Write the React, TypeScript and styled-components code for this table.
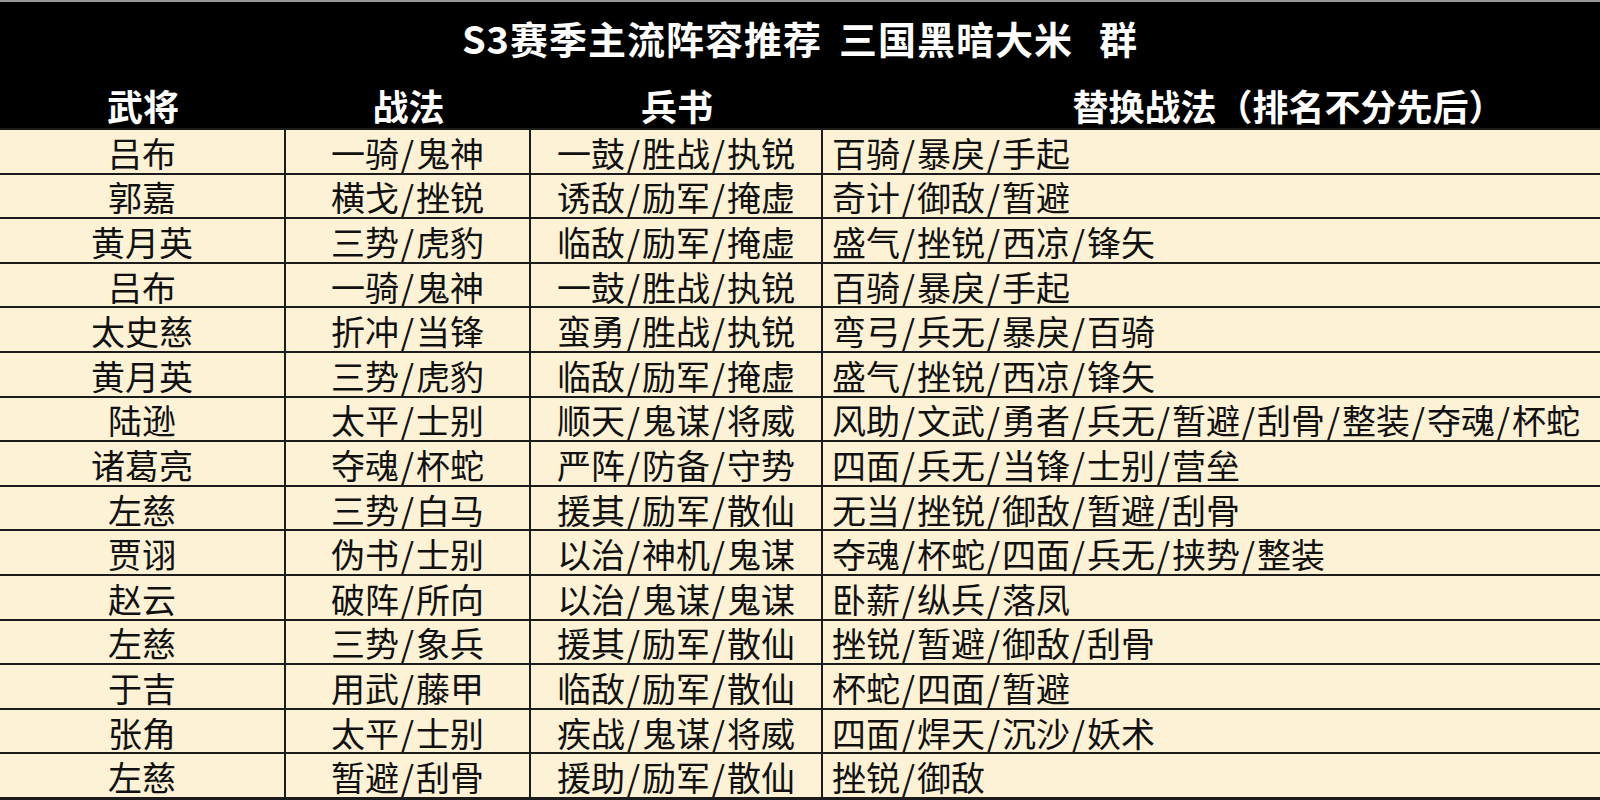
import React from "react";
import styled, { createGlobalStyle } from "styled-components";

const Global = createGlobalStyle`
  html, body { margin: 0; padding: 0; background: #fdf2d5; }
  body { font-family: "Noto Sans CJK SC", "Noto Sans", sans-serif; }
`;

const COLS = "286px 245px 292px 1fr";

const Page = styled.div`
  width: 1600px;
  height: 800px;
  overflow: hidden;
  background: #fdf2d5;
  display: flex;
  flex-direction: column;
`;

const Title = styled.div`
  height: 82px;
  box-sizing: border-box;
  border-top: 2px solid #9a9a9a;
  background: #000;
  color: #fff;
  font-size: 38px;
  line-height: 48px;
  letter-spacing: 1px;
  font-weight: 700;
  display: flex;
  align-items: center;
  justify-content: center;
  padding-bottom: 8px;
  white-space: nowrap;
`;

const TitleGap = styled.span<{ $w: number }>`
  display: inline-block;
  width: ${(p) => p.$w}px;
`;

const HeaderRow = styled.div`
  height: 46px;
  background: #000;
  display: grid;
  grid-template-columns: ${COLS};
`;

const HeadCell = styled.div<{ $shift?: number }>`
  color: #fff;
  font-size: 36px;
  line-height: 42px;
  font-weight: 700;
  display: flex;
  align-items: center;
  justify-content: center;
  padding-left: ${(p) => (p.$shift && p.$shift > 0 ? p.$shift : 0)}px;
  white-space: nowrap;
`;

const Body = styled.div`
  flex: 1;
  display: grid;
  grid-template-rows: repeat(15, 1fr);
  border-bottom: 3px solid #1c1c1c;
`;

const Row = styled.div`
  display: grid;
  grid-template-columns: ${COLS};
  border-top: 2px solid #1c1c1c;
  min-height: 0;
`;

const Cell = styled.div<{ $align?: "left" | "center"; $last?: boolean }>`
  display: flex;
  align-items: center;
  justify-content: ${(p) => (p.$align === "left" ? "flex-start" : "center")};
  padding-left: ${(p) => (p.$align === "left" ? "9px" : "0")};
  padding-top: 3px;
  border-right: ${(p) => (p.$last ? "none" : "2px solid #1c1c1c")};
  font-size: 34px;
  line-height: 38px;
  font-weight: 400;
  color: #111;
  white-space: nowrap;
  min-height: 0;
`;

const Sep = styled.span`
  display: inline-block;
  width: 17px;
  text-align: center;
`;

const rows: string[][] = [
  ["吕布", "一骑/鬼神", "一鼓/胜战/执锐", "百骑/暴戾/手起"],
  ["郭嘉", "横戈/挫锐", "诱敌/励军/掩虚", "奇计/御敌/暂避"],
  ["黄月英", "三势/虎豹", "临敌/励军/掩虚", "盛气/挫锐/西凉/锋矢"],
  ["吕布", "一骑/鬼神", "一鼓/胜战/执锐", "百骑/暴戾/手起"],
  ["太史慈", "折冲/当锋", "蛮勇/胜战/执锐", "弯弓/兵无/暴戾/百骑"],
  ["黄月英", "三势/虎豹", "临敌/励军/掩虚", "盛气/挫锐/西凉/锋矢"],
  ["陆逊", "太平/士别", "顺天/鬼谋/将威", "风助/文武/勇者/兵无/暂避/刮骨/整装/夺魂/杯蛇"],
  ["诸葛亮", "夺魂/杯蛇", "严阵/防备/守势", "四面/兵无/当锋/士别/营垒"],
  ["左慈", "三势/白马", "援其/励军/散仙", "无当/挫锐/御敌/暂避/刮骨"],
  ["贾诩", "伪书/士别", "以治/神机/鬼谋", "夺魂/杯蛇/四面/兵无/挟势/整装"],
  ["赵云", "破阵/所向", "以治/鬼谋/鬼谋", "卧薪/纵兵/落凤"],
  ["左慈", "三势/象兵", "援其/励军/散仙", "挫锐/暂避/御敌/刮骨"],
  ["于吉", "用武/藤甲", "临敌/励军/散仙", "杯蛇/四面/暂避"],
  ["张角", "太平/士别", "疾战/鬼谋/将威", "四面/焊天/沉沙/妖术"],
  ["左慈", "暂避/刮骨", "援助/励军/散仙", "挫锐/御敌"],
];

function Slashed({ text }: { text: string }) {
  const parts = text.split("/");
  return (
    <span>
      {parts.map((p, i) => (
        <React.Fragment key={i}>
          {i > 0 && <Sep>/</Sep>}
          {p}
        </React.Fragment>
      ))}
    </span>
  );
}

export default function App() {
  return (
    <Page>
      <Global />
      <Title>
        <span>S3赛季主流阵容推荐</span>
        <TitleGap $w={17} />
        <span>三国黑暗大米</span>
        <TitleGap $w={26} />
        <span>群</span>
      </Title>
      <HeaderRow>
        <HeadCell>武将</HeadCell>
        <HeadCell>战法</HeadCell>
        <HeadCell>兵书</HeadCell>
        <HeadCell $shift={154}>替换战法（排名不分先后）</HeadCell>
      </HeaderRow>
      <Body>
        {rows.map((r, i) => (
          <Row key={i}>
            <Cell>{r[0]}</Cell>
            <Cell>
              <Slashed text={r[1]} />
            </Cell>
            <Cell>
              <Slashed text={r[2]} />
            </Cell>
            <Cell $align="left" $last>
              <Slashed text={r[3]} />
            </Cell>
          </Row>
        ))}
      </Body>
    </Page>
  );
}
